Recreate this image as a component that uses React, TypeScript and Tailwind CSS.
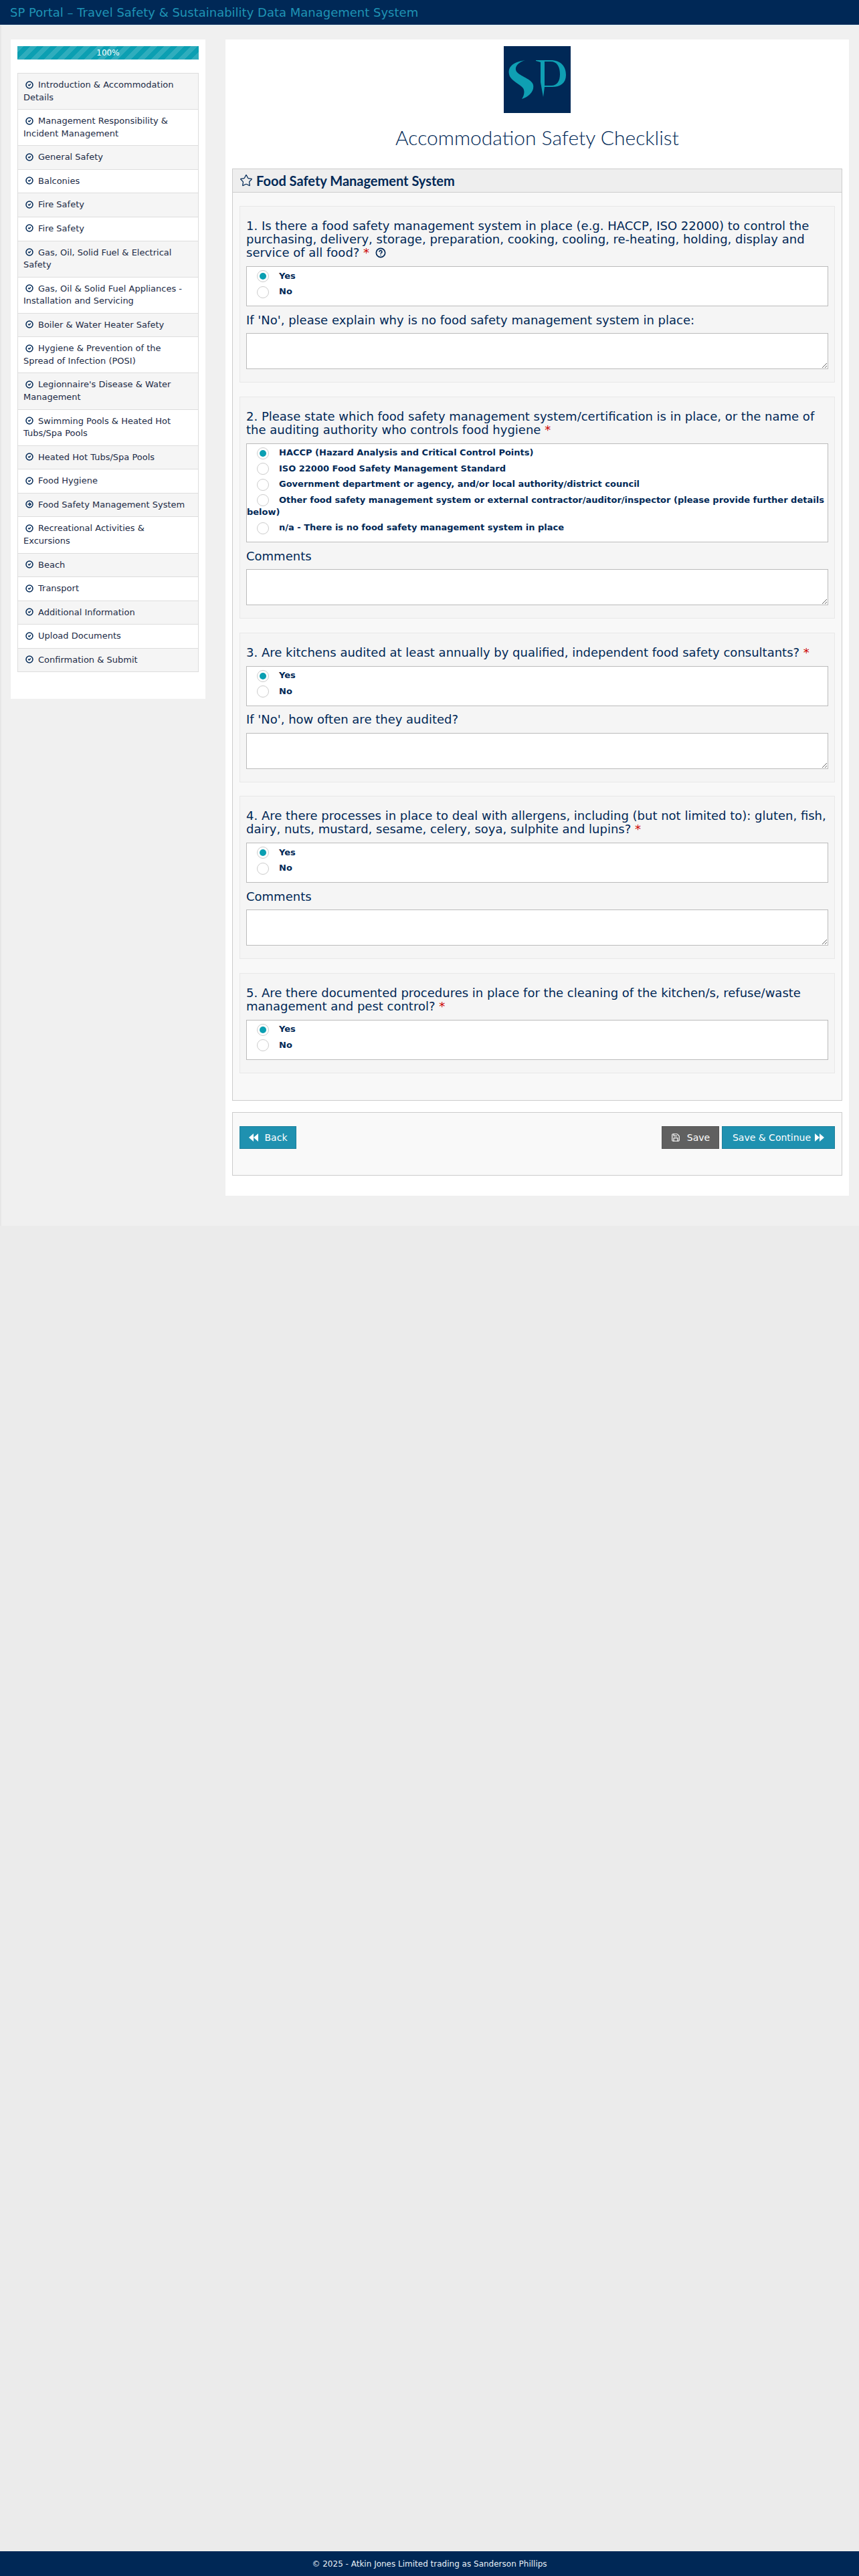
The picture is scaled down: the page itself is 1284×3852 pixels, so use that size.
import React from 'react';
import { CircleArrowRight, CircleCheck, CircleHelp, Save, Star } from 'lucide-react';

const navItems = [
  'Introduction & Accommodation Details',
  'Management Responsibility & Incident Management',
  'General Safety',
  'Balconies',
  'Fire Safety',
  'Fire Safety',
  'Gas, Oil, Solid Fuel & Electrical Safety',
  'Gas, Oil & Solid Fuel Appliances - Installation and Servicing',
  'Boiler & Water Heater Safety',
  'Hygiene & Prevention of the Spread of Infection (POSI)',
  "Legionnaire's Disease & Water Management",
  'Swimming Pools & Heated Hot Tubs/Spa Pools',
  'Heated Hot Tubs/Spa Pools',
  'Food Hygiene',
  'Food Safety Management System',
  'Recreational Activities & Excursions',
  'Beach',
  'Transport',
  'Additional Information',
  'Upload Documents',
  'Confirmation & Submit',
];

const CURRENT_ITEM = 'Food Safety Management System';

type Question = {
  text: string;
  help?: boolean;
  options: string[];
  followUp?: string;
};

const yesNo = ['Yes', 'No'];

const questions: Question[] = [
  {
    text: '1. Is there a food safety management system in place (e.g. HACCP, ISO 22000) to control the purchasing, delivery, storage, preparation, cooking, cooling, re-heating, holding, display and service of all food?',
    help: true,
    options: yesNo,
    followUp: "If 'No', please explain why is no food safety management system in place:",
  },
  {
    text: '2. Please state which food safety management system/certification is in place, or the name of the auditing authority who controls food hygiene',
    options: [
      'HACCP (Hazard Analysis and Critical Control Points)',
      'ISO 22000 Food Safety Management Standard',
      'Government department or agency, and/or local authority/district council',
      'Other food safety management system or external contractor/auditor/inspector (please provide further details below)',
      'n/a - There is no food safety management system in place',
    ],
    followUp: 'Comments',
  },
  {
    text: '3. Are kitchens audited at least annually by qualified, independent food safety consultants?',
    options: yesNo,
    followUp: "If 'No', how often are they audited?",
  },
  {
    text: '4. Are there processes in place to deal with allergens, including (but not limited to): gluten, fish, dairy, nuts, mustard, sesame, celery, soya, sulphite and lupins?',
    options: yesNo,
    followUp: 'Comments',
  },
  {
    text: '5. Are there documented procedures in place for the cleaning of the kitchen/s, refuse/waste management and pest control?',
    options: yesNo,
  },
];

const Logo = () => (
  <svg viewBox="0 0 100 100" className="block h-[100px] w-[100px]">
    <rect width="100" height="100" fill="#002856" />
    <path
      d="M32 21 C18 23 5 29 8 42 C10 52 24 56 29 63 C32 68 30 75 27 79 C37 76 46 68 44 58 C42 49 24 45 19 38 C15 31 22 24 32 21 Z"
      fill="#0f9fb3"
    />
    <path
      d="M48 21 H70 C86 21 93 31 93 43 C93 55 85 61 72 61 H61 L59 76 L55 54 L55 24 L48 22 Z M61 23 V59 H71 C80 59 84 52 84 42 C84 31 80 23 70 23 Z"
      fill="#0f9fb3"
      fillRule="evenodd"
    />
  </svg>
);

const Radio = ({ checked }: { checked: boolean }) => (
  <span className="mx-[15px] -my-1 inline-flex h-[18px] w-[18px] items-center justify-center rounded-full border border-[#ccc] bg-white align-middle">
    {checked && <span className="h-[10px] w-[10px] rounded-full bg-[#0b9fb2]" />}
  </span>
);

const QuestionBlock = ({ question }: { question: Question }) => (
  <div className="mb-[20.5px] border border-[#e8e8e8] bg-[#f5f5f5] px-[9px] pt-[19px] pb-[19px]">
    <div className="mb-[10px] text-[18px] leading-[20px] text-[#002856]">
      {question.text} <span className="text-[#cc0000]">*</span>
      {question.help && (
        <CircleHelp className="ml-[9px] inline-block h-4 w-4 align-[-2px]" strokeWidth={2.5} />
      )}
    </div>
    <div className="border border-[#bbb] bg-white pt-[2px] pb-[9px] text-[13px] leading-[18px] font-bold text-[#002856]">
      {question.options.map((option, index) => (
        <div key={option} className="py-[2.75px]">
          <Radio checked={index === 0} />
          {option}
        </div>
      ))}
    </div>
    {question.followUp && (
      <>
        <div className="flex h-[40px] items-center text-[18px] text-[#002856]">{question.followUp}</div>
        <textarea className="block h-[54px] w-full border border-[#bbb] bg-white" />
      </>
    )}
  </div>
);

const Rewind = () => (
  <svg viewBox="0 0 14 12" className="h-3 w-[14px]" fill="currentColor">
    <path d="M7 0 V12 L0 6 Z M14 0 V12 L7 6 Z" />
  </svg>
);

const Forward = () => (
  <svg viewBox="0 0 14 12" className="h-3 w-[14px]" fill="currentColor">
    <path d="M0 0 V12 L7 6 Z M7 0 V12 L14 6 Z" />
  </svg>
);

const App: React.FC = () => {
  return (
    <div className="flex min-h-[3852px] flex-col bg-[#ebebeb] font-['DejaVu_Sans',sans-serif]">
      {/* Header */}
      <header className="flex h-[37px] items-center bg-[#002856] px-[15px] text-[18px] text-[#1f93b4]">
        SP Portal – Travel Safety &amp; Sustainability Data Management System
      </header>

      <div className="flex flex-1 flex-col">
        <div className="flex h-[1796px] items-start border-t-2 border-l-2 border-t-[#e8f0f4] border-l-[#e6e6e6] bg-[#f0f0f0] pt-5">
          {/* Sidebar */}
          <aside className="ml-[14px] w-[291px] bg-white px-[10px] pt-[10px] pb-[41px]">
            <div className="mb-5 flex h-5 items-center justify-center bg-[#0b9fb2] bg-[linear-gradient(135deg,rgba(255,255,255,0.15)_25%,transparent_25%,transparent_50%,rgba(255,255,255,0.15)_50%,rgba(255,255,255,0.15)_75%,transparent_75%,transparent)] bg-size-[20px_20px] text-[12px] text-white">
              100%
            </div>
            <ul>
              {navItems.map((item, index) => (
                <li
                  key={index}
                  className={`-mb-px border border-[#ddd] px-2 py-2 text-[13px] leading-[18.57px] text-[#1c2b46] ${
                    index % 2 === 0 ? 'bg-[#f5f5f5]' : 'bg-white'
                  }`}
                >
                  {item === CURRENT_ITEM ? (
                    <CircleArrowRight className="mr-[7px] ml-[3px] inline-block h-3 w-3 align-[-1.5px] text-[#002856]" strokeWidth={3} />
                  ) : (
                    <CircleCheck className="mr-[7px] ml-[3px] inline-block h-3 w-3 align-[-1.5px] text-[#002856]" strokeWidth={3} />
                  )}
                  {item}
                </li>
              ))}
            </ul>
          </aside>

          {/* Main */}
          <main className="ml-[30px] h-[1729px] w-[932px] bg-white px-[10px] pt-[10px]">
            <div className="flex justify-center">
              <Logo />
            </div>
            <h1 className="flex h-[83px] items-center justify-center pb-[11px] font-['Lato',sans-serif] text-[30px] font-light text-[#002856]">
              Accommodation Safety Checklist
            </h1>

            <section className="border border-[#ccc] bg-[#f8f8f8]">
              <div className="flex h-[35px] items-center gap-[5px] border-b border-[#ccc] bg-[#eeeeee] px-[10px] font-['Lato',sans-serif] text-[20px] font-bold text-[#002856]">
                <Star className="h-5 w-5" strokeWidth={1.5} />
                Food Safety Management System
              </div>
              <div className="px-[10px] pt-5 pb-5">
                {questions.map((question) => (
                  <QuestionBlock key={question.text} question={question} />
                ))}
              </div>
            </section>

            <div className="mt-[17px] flex h-[95px] items-start justify-between border border-[#ccc] bg-[#f9f9f9] px-[10px] pt-5">
              <button className="flex h-[34px] w-[85px] items-center justify-center gap-[10px] border border-[#1a7f9c] bg-[#1f91b0] text-[14px] text-white">
                <Rewind />
                Back
              </button>
              <div className="flex gap-1">
                <button className="flex h-[34px] w-[86px] items-center justify-center gap-[10px] border border-[#555] bg-[#606060] text-[14px] text-white">
                  <Save className="h-[14px] w-[14px]" />
                  Save
                </button>
                <button className="flex h-[34px] w-[169px] items-center justify-center gap-[6px] border border-[#1a7f9c] bg-[#1f91b0] text-[14px] text-white">
                  Save &amp; Continue
                  <Forward />
                </button>
              </div>
            </div>
          </main>
        </div>

        <div className="flex-1" />
      </div>

      {/* Footer */}
      <footer className="flex h-[37px] items-center justify-center bg-[#002856] text-[12px] text-[#e8f0f7]">
        © 2025 - Atkin Jones Limited trading as Sanderson Phillips
      </footer>
    </div>
  );
};

export default App;
